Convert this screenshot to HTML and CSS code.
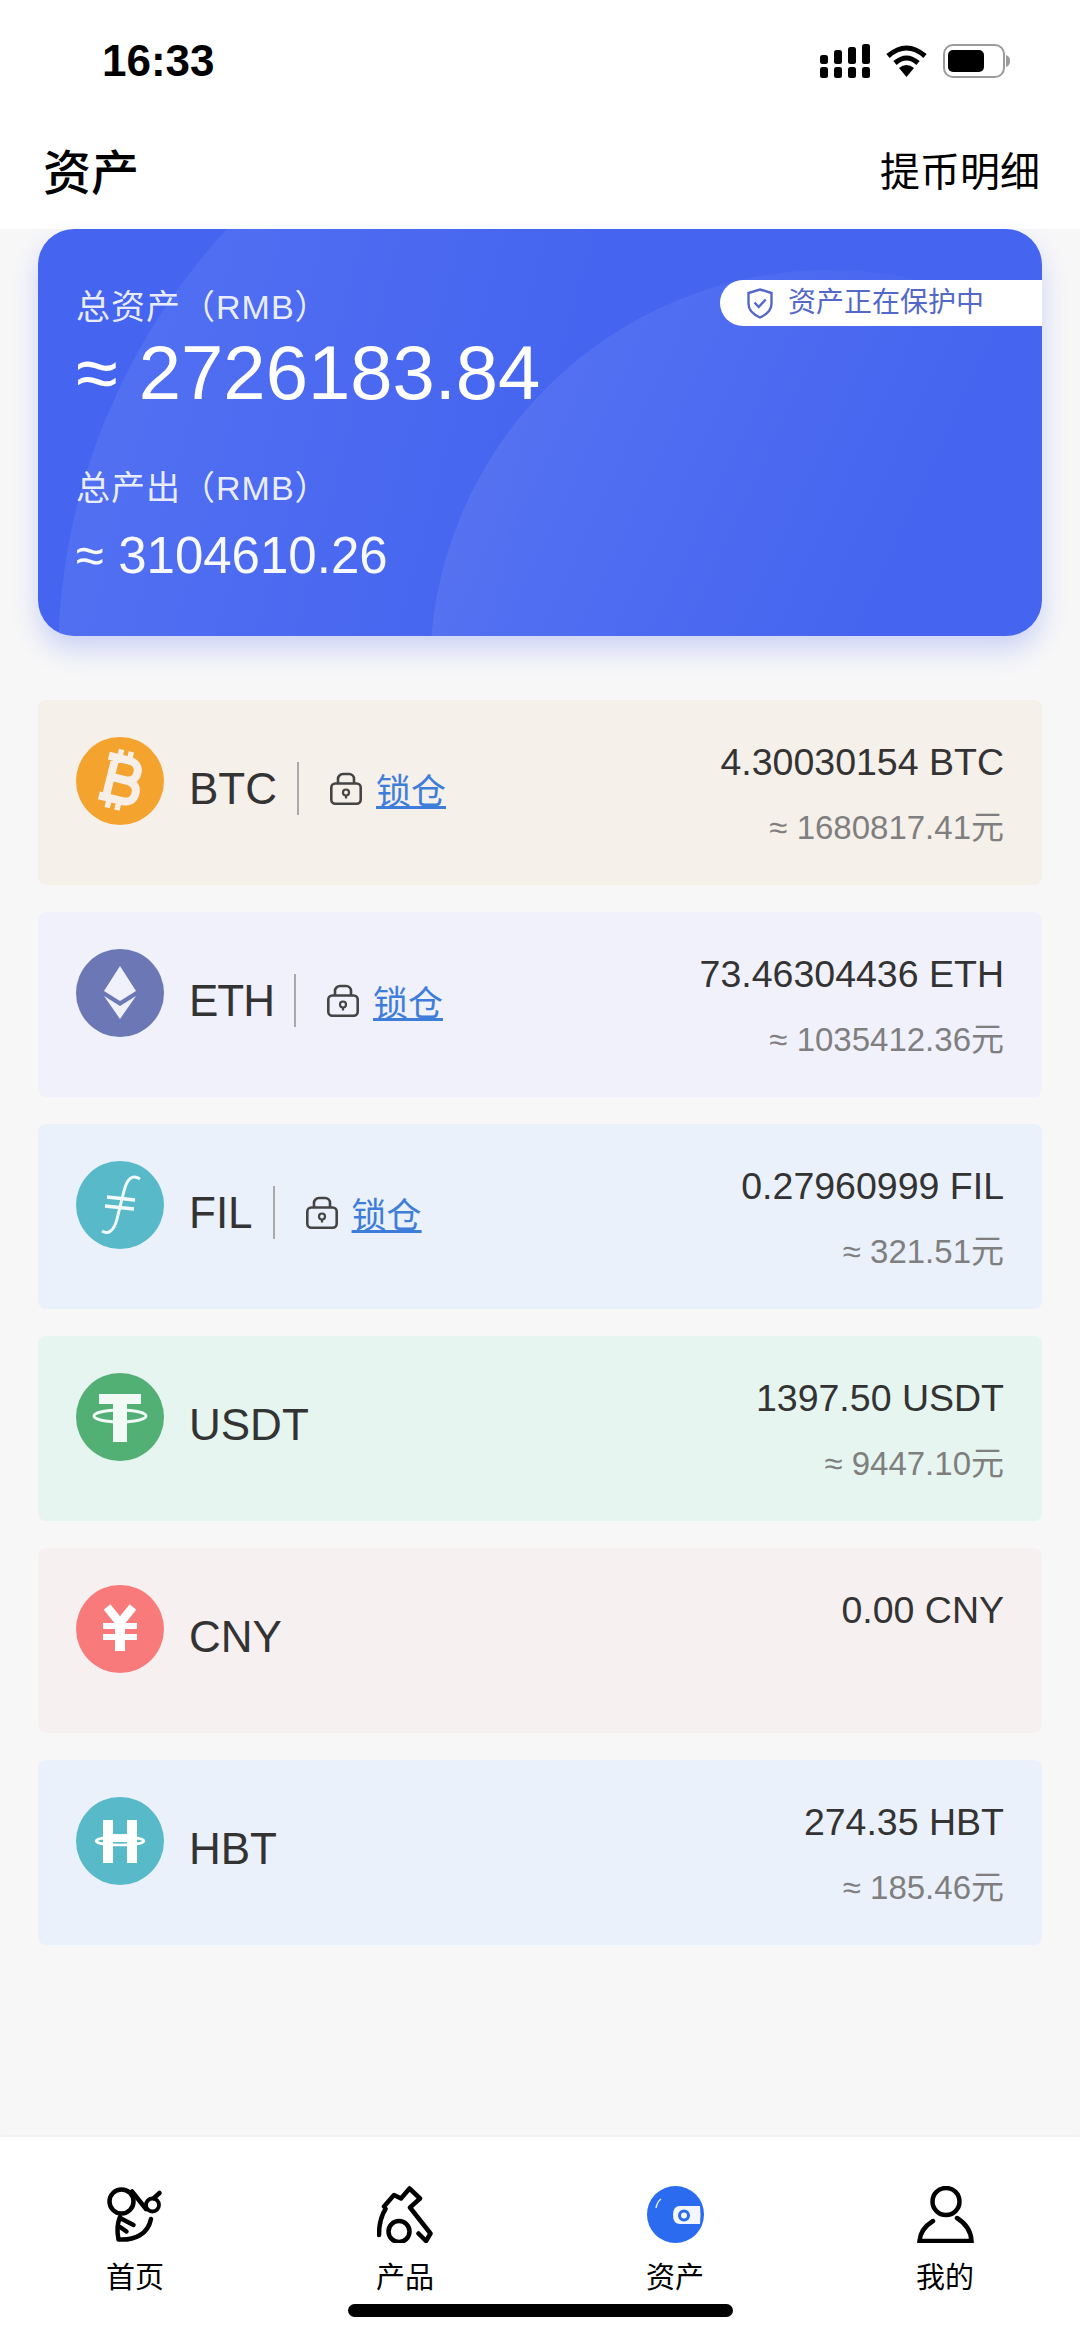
FILE: index.html
```html
<!DOCTYPE html>
<html lang="zh-CN">
<head>
    <meta charset="UTF-8">
    <meta name="viewport" content="width=device-width, initial-scale=1.0">
    <title>资产</title>
    <link rel="stylesheet" href="styles.css">
</head>
<body>
    <svg class="defs" width="0" height="0">
        <symbol id="lock" viewBox="0 0 32 33">
            <path d="M8 12V7a5 5 0 0 1 5-5h6a5 5 0 0 1 5 5v5" fill="none" stroke="#444" stroke-width="2.600"/>
            <rect x="1.300" y="11.500" width="29.400" height="20.200" rx="4" fill="none" stroke="#444" stroke-width="2.600"/>
            <circle cx="16" cy="20.500" r="3" fill="none" stroke="#444" stroke-width="2.200"/>
            <path d="M16 23v3.500" stroke="#444" stroke-width="2.200"/>
        </symbol>
    </svg>

    <div class="app">
        <div class="status-bar">
            <span class="time">16:33</span>
            <div class="status-icons">
                <svg width="50" height="34" viewBox="0 0 50 34">
                    <rect x="0" y="11" width="8" height="9" rx="2.500"/>
                    <rect x="0" y="23" width="8" height="11" rx="2.500"/>
                    <rect x="14" y="6" width="8" height="14" rx="2.500"/>
                    <rect x="14" y="23" width="8" height="11" rx="2.500"/>
                    <rect x="28" y="3" width="8" height="17" rx="2.500"/>
                    <rect x="28" y="23" width="8" height="11" rx="2.500"/>
                    <rect x="42" y="0" width="8" height="20" rx="2.500"/>
                    <rect x="42" y="23" width="8" height="11" rx="2.500"/>
                </svg>
                <svg width="41" height="32" viewBox="0 0 41 32">
                    <path d="M2 11Q20.500-5 39 11M9 18Q20.500 8 32 18" fill="none" stroke="#000" stroke-width="5"/>
                    <path d="M13 23Q20.500 17 28 23L20.500 32Z"/>
                </svg>
                <svg width="67" height="34" viewBox="0 0 67 34">
                    <rect x="1" y="1" width="60" height="32" rx="9" fill="none" stroke="#9b9b9b" stroke-width="2"/>
                    <rect x="5" y="6" width="36" height="22" rx="5"/>
                    <path d="M63 11c3 1 4 3 4 6s-1 5-4 6z" fill="#9b9b9b"/>
                </svg>
            </div>
        </div>

        <header class="top-bar">
            <h1>资产</h1>
            <a class="top-link">提币明细</a>
        </header>

        <main class="content">
            <section class="summary-card">
                <div class="card-glow">
                    <div class="glow-large"></div>
                    <div class="glow-small"></div>
                </div>
                <div class="summary-text">
                    <div class="summary-label">总资产（RMB）</div>
                    <div class="summary-total">≈ 2726183.84</div>
                    <div class="summary-label output-label">总产出（RMB）</div>
                    <div class="summary-output">≈ 3104610.26</div>
                </div>
                <div class="protect-badge">
                    <svg width="26" height="31" viewBox="0 0 26 31">
                        <path d="M13 1.500 24.500 5v11c0 6.500-5 10.500-11.500 13.500C6.500 26.500 1.500 22.500 1.500 16V5z" fill="none" stroke="#5468c8" stroke-width="2.400"/>
                        <path d="M7.500 14.500l4.200 4.500 7-7.500" fill="none" stroke="#5468c8" stroke-width="2.400"/>
                    </svg>
                    <span>资产正在保护中</span>
                </div>
            </section>

            <ul class="coin-list">
                <li class="coin-row row-btc">
                    <svg class="coin-icon" viewBox="0 0 88 88">
                        <circle cx="44" cy="44" r="44" fill="#f5a32f"/>
                        <g transform="rotate(14 44 44)" fill="none" stroke="#f6efe8">
                            <path d="M27 22H48c7 0 11 4 11 10s-4 10-11 10H34M34 42H51c7 0 11 4 11 10.500S58 63 51 63H27M34 20V65" stroke-width="8"/>
                            <path d="M38 13v9M48 13v9M38 63v10M48 63v10" stroke-width="5.500"/>
                        </g>
                    </svg>
                    <div class="coin-info">
                        <span class="coin-name">BTC</span>
                        <i class="divider"></i>
                        <svg class="lock-icon"><use href="#lock"/></svg>
                        <a class="lock-link">锁仓</a>
                    </div>
                    <div class="coin-values">
                        <div class="amount">4.30030154 BTC</div>
                        <div class="worth">≈ 1680817.41元</div>
                    </div>
                </li>
                <li class="coin-row row-eth">
                    <svg class="coin-icon" viewBox="0 0 88 88">
                        <circle cx="44" cy="44" r="44" fill="#6b78b5"/>
                        <path d="M44 17 60 42 44 52 28 42Z" fill="#f1f1fc"/>
                        <path d="M28 47 44 57 60 47 44 70Z" fill="#f1f1fc"/>
                    </svg>
                    <div class="coin-info">
                        <span class="coin-name name-tight">ETH</span>
                        <i class="divider"></i>
                        <svg class="lock-icon"><use href="#lock"/></svg>
                        <a class="lock-link">锁仓</a>
                    </div>
                    <div class="coin-values">
                        <div class="amount">73.46304436 ETH</div>
                        <div class="worth">≈ 1035412.36元</div>
                    </div>
                </li>
                <li class="coin-row row-fil">
                    <svg class="coin-icon" viewBox="0 0 88 88">
                        <circle cx="44" cy="44" r="44" fill="#58b9c8"/>
                        <path d="M64 18C56 13 51 18 48 30L41 58C38 70 32 74 26 70" fill="none" stroke="#f3fafb" stroke-width="3"/>
                        <path d="M31 36 59 39M29 45 58 48" stroke="#f3fafb" stroke-width="3.500"/>
                    </svg>
                    <div class="coin-info">
                        <span class="coin-name">FIL</span>
                        <i class="divider"></i>
                        <svg class="lock-icon"><use href="#lock"/></svg>
                        <a class="lock-link">锁仓</a>
                    </div>
                    <div class="coin-values">
                        <div class="amount">0.27960999 FIL</div>
                        <div class="worth">≈ 321.51元</div>
                    </div>
                </li>
                <li class="coin-row row-usdt">
                    <svg class="coin-icon" viewBox="0 0 88 88">
                        <circle cx="44" cy="44" r="44" fill="#52b075"/>
                        <path d="M23 21H65V31H51V69H37V31H23Z" fill="#f1faf5"/>
                        <ellipse cx="44" cy="43" rx="26" ry="6" fill="none" stroke="#f1faf5" stroke-width="3"/>
                    </svg>
                    <div class="coin-info">
                        <span class="coin-name">USDT</span>
                    </div>
                    <div class="coin-values">
                        <div class="amount">1397.50 USDT</div>
                        <div class="worth">≈ 9447.10元</div>
                    </div>
                </li>
                <li class="coin-row row-cny">
                    <svg class="coin-icon" viewBox="0 0 88 88">
                        <circle cx="44" cy="44" r="44" fill="#f97a7a"/>
                        <path d="M31 22 44 38 57 22" fill="none" stroke="#fff" stroke-width="8.500"/>
                        <path d="M27 41H61M27 52H61" stroke="#fff" stroke-width="6"/>
                        <path d="M44 36V66" stroke="#fff" stroke-width="10"/>
                    </svg>
                    <div class="coin-info">
                        <span class="coin-name">CNY</span>
                    </div>
                    <div class="coin-values">
                        <div class="amount">0.00 CNY</div>
                    </div>
                </li>
                <li class="coin-row row-hbt">
                    <svg class="coin-icon" viewBox="0 0 88 88">
                        <circle cx="44" cy="44" r="44" fill="#58b9c8"/>
                        <path d="M32 23V66M56 23V66" stroke="#fff" stroke-width="10"/>
                        <path d="M36 41H52" stroke="#fff" stroke-width="8"/>
                        <ellipse cx="44" cy="44" rx="24" ry="4" fill="none" stroke="#fff" stroke-width="2.500"/>
                    </svg>
                    <div class="coin-info">
                        <span class="coin-name">HBT</span>
                    </div>
                    <div class="coin-values">
                        <div class="amount">274.35 HBT</div>
                        <div class="worth">≈ 185.46元</div>
                    </div>
                </li>
            </ul>
        </main>

        <nav class="tab-bar">
            <a class="tab">
                <svg class="tab-icon" viewBox="0 0 57 57" fill="none" stroke="#000" stroke-width="4.500" stroke-linecap="round" stroke-linejoin="round">
                    <circle cx="14.500" cy="15.500" r="12"/>
                    <circle cx="45.500" cy="19" r="6.500" stroke-width="3.800"/>
                    <path d="M25 5.500 39 23M47 12 52.500 7M13 32 26.500 39M13 41 19.500 45.500"/>
                    <path d="M13 31C10 38 10 46 11.500 53.500 28 54.500 41 48 44 33"/>
                </svg>
                <span>首页</span>
            </a>
            <a class="tab">
                <svg class="tab-icon" viewBox="0 0 57 57" fill="none" stroke="#000" stroke-width="4.500" stroke-linecap="round" stroke-linejoin="round">
                    <circle cx="22" cy="45.500" r="10.500"/>
                    <path d="M2 49C2 38 4 30 8.500 23"/>
                    <path d="M7 20.500 17 9 24 12.500 32.500 2.500 43 12.500 33 21.500 53.500 47.500 49 55 41.500 47.500"/>
                </svg>
                <span>产品</span>
            </a>
            <a class="tab">
                <svg class="tab-icon" viewBox="0 0 57 57">
                    <circle cx="28.500" cy="28.500" r="28.500" fill="#2b6bf0"/>
                    <path d="M33 20H53Q54 29 53 38H33Q26 38 26 29 26 20 33 20Z" fill="#f3f6fe"/>
                    <circle cx="37" cy="29.500" r="4.500" fill="none" stroke="#2b6bf0" stroke-width="3"/>
                    <path d="M9 22Q10 16 14 13" fill="none" stroke="#dfe9fd" stroke-width="1.500"/>
                </svg>
                <span>资产</span>
            </a>
            <a class="tab">
                <svg class="tab-icon" viewBox="0 0 57 57" fill="none" stroke="#000" stroke-width="4.500">
                    <circle cx="29" cy="15.500" r="13.500"/>
                    <path d="M16 35C8 40 3 47 2.500 55H54.500C54 45 48 37 40 32" stroke-linecap="round"/>
                </svg>
                <span>我的</span>
            </a>
            <div class="home-bar"></div>
        </nav>
    </div>
</body>
</html>
```

FILE: styles.css
```css
* {
    box-sizing: border-box;
}

body {
    margin: 0;
    background-color: #f7f7f8;
    font-family: "Liberation Sans", "Noto Sans CJK SC", sans-serif;
    color: #333;
}

.defs {
    display: block;
}

.app {
    display: flex;
    flex-direction: column;
    height: 2337px;
    overflow: hidden;
}

.status-bar {
    display: flex;
    justify-content: space-between;
    align-items: center;
    height: 122px;
    padding: 0 70px 0 102px;
    background-color: #fff;
    color: #000;
}

.time {
    font-size: 44px;
    font-weight: 700;
}

.status-icons {
    display: flex;
    align-items: center;
    gap: 16px;
}

.top-bar {
    display: flex;
    justify-content: space-between;
    align-items: center;
    height: 107px;
    padding: 0 40px 14px 43px;
    background-color: #fff;
    color: #000;
}

.top-bar h1 {
    margin: 0;
    font-size: 48px;
    font-weight: 500;
}

.top-link {
    font-size: 40px;
}

.content {
    flex: 1;
    padding: 0 38px;
}

.summary-card {
    position: relative;
    height: 407px;
    padding: 51px 38px 0;
    border-radius: 36px;
    color: #fff;
    background-color: #4565f0;
    box-shadow: 0 14px 26px rgba(70, 100, 240, 0.24);
}

.card-glow {
    position: absolute;
    top: 0;
    right: 0;
    bottom: 0;
    left: 0;
    border-radius: 36px;
    overflow: hidden;
}

.glow-large {
    position: absolute;
    left: 20px;
    top: -203px;
    width: 1268px;
    height: 1268px;
    border-radius: 50%;
    background: linear-gradient(105deg, rgba(255, 255, 255, 0.09), rgba(255, 255, 255, 0) 38%);
}

.glow-small {
    position: absolute;
    left: 392px;
    top: 41px;
    width: 800px;
    height: 800px;
    border-radius: 50%;
    background: linear-gradient(115deg, rgba(255, 255, 255, 0.1), rgba(255, 255, 255, 0) 52%);
}

.summary-text {
    position: relative;
}

.protect-badge {
    position: absolute;
    top: 51px;
    right: 0;
    display: flex;
    align-items: center;
    gap: 15px;
    width: 322px;
    height: 46px;
    padding-left: 27px;
    border-radius: 23px 0 0 23px;
    background-color: #fff;
    color: #5468c8;
    font-size: 28px;
    line-height: 46px;
}

.summary-label {
    font-size: 34px;
    line-height: 54px;
    letter-spacing: 1px;
    color: rgba(255, 255, 255, 0.9);
}

.summary-total {
    margin-top: -3px;
    font-size: 76px;
    line-height: 84px;
}

.output-label {
    margin-top: 46px;
}

.summary-output {
    margin-top: 12px;
    font-size: 51px;
    line-height: 58px;
    color: rgba(255, 255, 255, 0.96);
}

.coin-list {
    display: flex;
    flex-direction: column;
    gap: 27px;
    margin: 64px 0 0;
    padding: 0;
    list-style: none;
}

.coin-row {
    display: flex;
    align-items: flex-start;
    height: 185px;
    padding: 37px 38px 0 38px;
    border-radius: 8px;
}

.row-btc { background-color: #f6f0ea; }
.row-eth { background-color: #f1f1fc; }
.row-fil { background-color: #ebf1fa; }
.row-usdt { background-color: #e6f5ef; }
.row-cny { background-color: #f6f0f1; }
.row-hbt { background-color: #ebf1fa; }

.coin-icon {
    width: 88px;
    height: 88px;
    flex-shrink: 0;
}

.coin-info {
    display: flex;
    align-items: center;
    height: 53px;
    margin: 25px 0 0 25px;
}

.coin-name {
    font-size: 44px;
}

.name-tight {
    letter-spacing: -1px;
}

.divider {
    width: 2px;
    height: 53px;
    margin: 0 31px 0 20px;
    background-color: #a9a9ad;
}

.lock-icon {
    width: 32px;
    height: 33px;
    margin-right: 14px;
}

.lock-link {
    font-size: 35px;
    color: #3f7ddb;
    text-decoration: underline;
}

.coin-values {
    margin-left: auto;
    padding-top: 3px;
    text-align: right;
}

.amount {
    font-size: 37.500px;
    line-height: 44px;
}

.worth {
    margin-top: 24px;
    font-size: 33px;
    line-height: 40px;
    color: #7f7f7f;
}

.tab-bar {
    position: relative;
    display: grid;
    grid-template-columns: repeat(4, 1fr);
    height: 200px;
    padding-top: 49px;
    background-color: #fff;
    box-shadow: 0 -1px 2px rgba(0, 0, 0, 0.05);
}

.tab {
    display: flex;
    flex-direction: column;
    align-items: center;
    color: #000;
    font-size: 29px;
    line-height: 42px;
}

.tab-icon {
    width: 57px;
    height: 57px;
    margin-bottom: 14px;
}

.home-bar {
    position: absolute;
    left: 348px;
    bottom: 20px;
    width: 385px;
    height: 13px;
    border-radius: 7px;
    background-color: #000;
}
```
